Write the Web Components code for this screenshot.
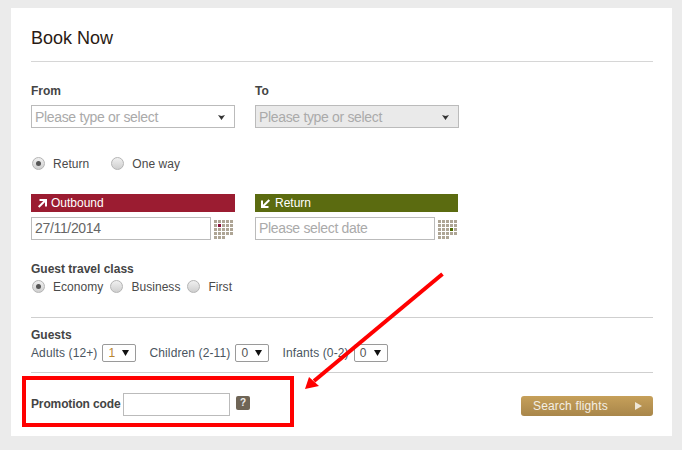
<!DOCTYPE html>
<html>
<head>
<meta charset="utf-8">
<title>Book Now</title>
<style>
  html, body { margin: 0; padding: 0; }
  body {
    background: #ebebeb;
    font-family: "Liberation Sans", Arial, sans-serif;
    font-size: 12px;
    color: #4a4a4a;
    width: 682px;
    height: 450px;
    overflow: hidden;
    position: relative;
  }
</style>
</head>
<body>
<book-card>
  <card-title>Book Now</card-title>

  <div style="display:flex;gap:20px;margin-top:21px">
    <combo-field label="From" text="Please type or select"></combo-field>
    <combo-field label="To" text="Please type or select" disabled></combo-field>
  </div>

  <div style="display:flex;gap:21px;margin-top:27px;height:16px">
    <radio-opt checked>Return</radio-opt>
    <radio-opt>One way</radio-opt>
  </div>

  <div style="display:flex;gap:20px;margin-top:23px">
    <date-panel heading="Outbound" dir="out" color="#9b1c31" mark="#8a0f3c" cell="6" barw="204" value="27/11/2014"></date-panel>
    <date-panel heading="Return" dir="back" color="#5b6b10" mark="#4f6a00" cell="13" barw="203" placeholder="Please select date"></date-panel>
  </div>

  <field-label style="margin-top:21px">Guest travel class</field-label>
  <div style="display:flex;gap:6px;margin-top:3px;height:16px">
    <radio-opt checked>Economy</radio-opt>
    <radio-opt>Business</radio-opt>
    <radio-opt>First</radio-opt>
  </div>

  <h-rule style="margin-top:23px"></h-rule>

  <field-label style="margin-top:9px">Guests</field-label>
  <div style="display:flex;gap:13px;margin-top:3px">
    <guest-count label="Adults (12+)" value="1" tint="#b8862f"></guest-count>
    <guest-count label="Children (2-11)" value="0"></guest-count>
    <guest-count label="Infants (0-2)" value="0"></guest-count>
  </div>

  <h-rule style="margin-top:10px"></h-rule>

  <promo-row style="margin-top:20px"></promo-row>
</book-card>
<red-callout></red-callout>

<script>
class BookCard extends HTMLElement {
  connectedCallback() {
    this.attachShadow({ mode: 'open' });
    this.shadowRoot.innerHTML = `
      <style>
        :host {
          display: block;
          box-sizing: border-box;
          width: 661px;
          height: 428px;
          margin: 8px 0 0 11px;
          padding: 0 19px 0 20px;
          background: #fff;
        }
      </style>
      <slot></slot>
    `;
  }
}
customElements.define('book-card', BookCard);

class CardTitle extends HTMLElement {
  connectedCallback() {
    this.attachShadow({ mode: 'open' });
    this.shadowRoot.innerHTML = `
      <style>
        :host {
          display: block;
          height: 33px;
          padding-top: 20px;
          border-bottom: 1px solid #d6d6d6;
          font-size: 18px;
          line-height: 20px;
          color: #2a1a14;
        }
      </style>
      <slot></slot>
    `;
  }
}
customElements.define('card-title', CardTitle);

class FieldLabel extends HTMLElement {
  connectedCallback() {
    this.attachShadow({ mode: 'open' });
    this.shadowRoot.innerHTML = `
      <style>
        :host {
          display: block;
          height: 14px;
          font-size: 12px;
          line-height: 16px;
          font-weight: bold;
          color: #444;
        }
      </style>
      <slot></slot>
    `;
  }
}
customElements.define('field-label', FieldLabel);

class HRule extends HTMLElement {
  connectedCallback() {
    this.attachShadow({ mode: 'open' });
    this.shadowRoot.innerHTML = `
      <style>:host { display: block; height: 1px; background: #cfcfcf; }</style>
    `;
  }
}
customElements.define('h-rule', HRule);

class ComboField extends HTMLElement {
  connectedCallback() {
    const off = this.hasAttribute('disabled');
    this.attachShadow({ mode: 'open' });
    this.shadowRoot.innerHTML = `
      <style>
        :host { display: block; width: 204px; }
        .label { font-weight: bold; line-height: 16px; height: 14px; color: #444; }
        .box {
          box-sizing: border-box;
          height: 23px;
          margin-top: 8px;
          border: 1px solid #bbb;
          padding: 0 9px 0 3px;
          display: flex;
          align-items: center;
          justify-content: space-between;
          font-size: 14px;
          letter-spacing: -0.33px;
          color: #aaa;
          background: ${off ? '#eaeaea' : '#fff'};
        }
        svg { display: block; margin-top: 2px; }
      </style>
      <div class="label">${this.getAttribute('label')}</div>
      <div class="box">
        <span>${this.getAttribute('text')}</span>
        <svg width="7" height="5" viewBox="0 0 7 5"><path d="M0 0 L3.5 1 L7 0 L3.5 5 Z" fill="#333"/></svg>
      </div>
    `;
  }
}
customElements.define('combo-field', ComboField);

class RadioOpt extends HTMLElement {
  connectedCallback() {
    const dot = this.hasAttribute('checked') ? '<i></i>' : '';
    this.attachShadow({ mode: 'open' });
    this.shadowRoot.innerHTML = `
      <style>
        :host { display: flex; align-items: center; gap: 8px; height: 16px; padding-left: 1px; color: #4a4a4a; letter-spacing: 0.05px; }
        .r {
          box-sizing: border-box;
          width: 13px;
          height: 13px;
          border-radius: 50%;
          border: 1px solid #b4b4b4;
          background: linear-gradient(#f0f0f0, #cfcfcf);
          display: flex;
          align-items: center;
          justify-content: center;
        }
        i { width: 5px; height: 5px; border-radius: 50%; background: #555; }
        span.t { position: relative; top: 1px; }
      </style>
      <span class="r">${dot}</span><span class="t"><slot></slot></span>
    `;
  }
}
customElements.define('radio-opt', RadioOpt);

class CalGrid extends HTMLElement {
  connectedCallback() {
    // 5 x 5 dots, the last row is cut short
    const skip = [23, 24];
    const active = Number(this.getAttribute('cell'));
    let cells = '';
    for (let i = 0; i < 25; i++) {
      const bg = i === active ? this.getAttribute('mark') : skip.includes(i) ? 'transparent' : '#aea595';
      cells += `<b style="background:${bg}"></b>`;
    }
    this.attachShadow({ mode: 'open' });
    this.shadowRoot.innerHTML = `
      <style>
        :host { display: grid; grid-template-columns: repeat(5, 3px); grid-auto-rows: 3px; gap: 1px; }
        b { display: block; }
      </style>
      ${cells}
    `;
  }
}
customElements.define('cal-grid', CalGrid);

class DatePanel extends HTMLElement {
  connectedCallback() {
    const value = this.getAttribute('value');
    const text = value || this.getAttribute('placeholder');
    const arrow = this.getAttribute('dir') === 'out'
      ? 'M1.7 9 L8 2.7 M2.5 2 H9 V8.5'
      : 'M8.3 2 L2 8.3 M1 2.5 V9 H7.5';
    this.attachShadow({ mode: 'open' });
    this.shadowRoot.innerHTML = `
      <style>
        :host { display: block; width: 204px; }
        .bar {
          width: ${this.getAttribute('barw')}px;
          box-sizing: border-box;
          height: 18px;
          background: ${this.getAttribute('color')};
          color: #fff;
          display: flex;
          align-items: center;
          gap: 4px;
          padding-left: 6px;
          line-height: 18px;
        }
        .line { display: flex; margin-top: 5px; gap: 3px; }
        .box {
          box-sizing: border-box;
          width: 180px;
          height: 23px;
          border: 1px solid #bbb;
          padding-left: 3px;
          font-size: 14px;
          letter-spacing: -0.33px;
          line-height: 21px;
          color: ${value ? '#666' : '#aaa'};
        }
        cal-grid { margin-top: 3px; }
      </style>
      <div class="bar">
        <svg width="10" height="10" viewBox="0 0 10 10"><path d="${arrow}" fill="none" stroke="#fff" stroke-width="2"/></svg>
        <span>${this.getAttribute('heading')}</span>
      </div>
      <div class="line">
        <div class="box">${text}</div>
        <cal-grid cell="${this.getAttribute('cell')}" mark="${this.getAttribute('mark')}"></cal-grid>
      </div>
    `;
  }
}
customElements.define('date-panel', DatePanel);

class GuestCount extends HTMLElement {
  connectedCallback() {
    const tint = this.getAttribute('tint') || '#555';
    this.attachShadow({ mode: 'open' });
    this.shadowRoot.innerHTML = `
      <style>
        :host { display: flex; align-items: center; gap: 5px; height: 18px; color: #4a5560; }
        .name { letter-spacing: 0.12px; }
        .pick {
          box-sizing: border-box;
          width: 34px;
          height: 18px;
          border: 1px solid #9a9a9a;
          border-radius: 2px;
          padding: 0 6px 0 5px;
          display: flex;
          align-items: center;
          justify-content: space-between;
          color: ${tint};
        }
        svg { display: block; }
      </style>
      <span class="name">${this.getAttribute('label')}</span>
      <div class="pick">
        <span>${this.getAttribute('value')}</span>
        <svg width="7" height="6" viewBox="0 0 7 6"><path d="M0 0 H7 L3.5 6 Z" fill="#111"/></svg>
      </div>
    `;
  }
}
customElements.define('guest-count', GuestCount);

class PromoRow extends HTMLElement {
  connectedCallback() {
    this.attachShadow({ mode: 'open' });
    this.shadowRoot.innerHTML = `
      <style>
        :host { display: flex; align-items: flex-start; height: 23px; }
        .label { font-weight: bold; line-height: 23px; color: #444; width: 92px; letter-spacing: -0.13px; white-space: nowrap; }
        .input { box-sizing: border-box; width: 107px; height: 23px; border: 1px solid #bbb; background: #fff; }
        .help {
          width: 14px;
          height: 14px;
          margin: 3px 0 0 6px;
          border-radius: 2px;
          background: #6f6556;
          color: #eee;
          font-size: 10px;
          font-weight: bold;
          line-height: 14px;
          text-align: center;
        }
        .go {
          box-sizing: border-box;
          width: 132px;
          height: 20px;
          margin: 3px 0 0 auto;
          padding: 0 11px 0 12px;
          border-radius: 3px;
          background: linear-gradient(#c6a05a, #a8864a);
          color: #f4efe4;
          display: flex;
          align-items: center;
          justify-content: space-between;
          letter-spacing: 0.15px;
        }
        svg { display: block; }
      </style>
      <div class="label">Promotion code</div>
      <div class="input"></div>
      <div class="help">?</div>
      <div class="go">
        <span>Search flights</span>
        <svg width="7" height="8" viewBox="0 0 7 8"><path d="M0 0 L7 4 L0 8 Z" fill="#eee6d6"/></svg>
      </div>
    `;
  }
}
customElements.define('promo-row', PromoRow);

// the red markup drawn on top of the screenshot
class RedCallout extends HTMLElement {
  connectedCallback() {
    this.attachShadow({ mode: 'open' });
    this.shadowRoot.innerHTML = `
      <style>
        :host { position: absolute; left: 0; top: 0; width: 682px; height: 450px; pointer-events: none; }
        .frame {
          position: absolute;
          left: 22px;
          top: 376px;
          width: 272px;
          height: 51px;
          box-sizing: border-box;
          border: 4px solid #f00;
        }
        svg { position: absolute; left: 0; top: 0; }
      </style>
      <div class="frame"></div>
      <svg width="682" height="450" viewBox="0 0 682 450">
        <path d="M442.5 274 L314 381" stroke="#f00" stroke-width="4" fill="none"/>
        <path d="M305 389 L309 377 L319 386 Z" fill="#f00"/>
      </svg>
    `;
  }
}
customElements.define('red-callout', RedCallout);
</script>
</body>
</html>
